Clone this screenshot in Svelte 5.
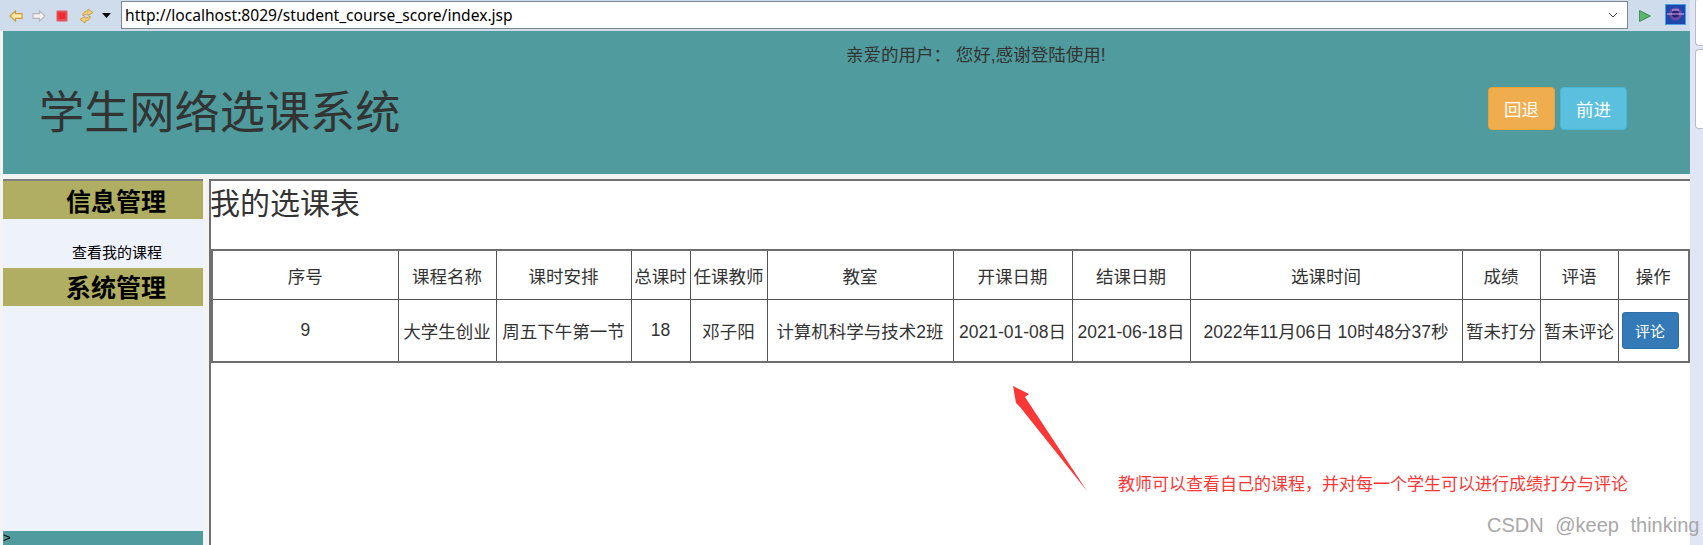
<script>
  const cols = [186, 98, 135, 59, 77, 186, 119, 118, 272, 78, 78, 71];
  const heads = ["序号", "课程名称", "课时安排", "总课时", "任课教师", "教室", "开课日期", "结课日期", "选课时间", "成绩", "评语", "操作"];
  const row = ["9", "大学生创业", "周五下午第一节", "18", "邓子阳", "计算机科学与技术2班", "2021-01-08日", "2021-06-18日", "2022年11月06日 10时48分37秒", "暂未打分", "暂未评论"];
</script>

<div class="page">
  <div class="main">
    <div class="toolbar">
      <div class="tools">
        <svg width="14" height="12" viewBox="0 0 15 13"><path d="M1 6.500 7 1v3h7v5H7v3z" fill="#fde9a8" stroke="#cf9a3a" stroke-width="1.300"/></svg>
        <svg width="14" height="12" viewBox="0 0 15 13"><path d="M14 6.500 8 1v3H1v5h7v3z" fill="#f2f2f2" stroke="#b4b8bc" stroke-width="1.300"/></svg>
        <svg class="stop" width="12" height="12" viewBox="0 0 12 12"><rect x="0.500" y="0.500" width="11" height="11" rx="1.500" fill="#e4505a" stroke="#dc98a2"/><rect x="2.500" y="2.500" width="7" height="6.500" fill="#ee2a30"/></svg>
        <svg class="sync" width="15" height="16" viewBox="0 0 15 16"><path d="M4 8C3 5 6 3 9 3V1l5 3.500-5 3V6C7 6 5 6.500 4 8zM11 8c1 3-2 5-5 5v2l-5-3.500 5-3V10c2 0 4-.5 5-2z" fill="#f5cf7c" stroke="#c6923a" stroke-width="0.800"/></svg>
        <svg class="drop" width="9" height="5" viewBox="0 0 9 5"><path d="M0 0h9L4.500 5z" fill="#000"/></svg>
      </div>
      <div class="url">
        <span>http://localhost:8029/student_course_score/index.jsp</span>
        <svg width="10" height="6" viewBox="0 0 10 6"><path d="M1 1l4 4 4-4" fill="none" stroke="#444" stroke-width="1"/></svg>
      </div>
      <svg class="go" width="12" height="12" viewBox="0 0 12 12"><path d="M0.500 0.500 11.500 6 0.500 11.500z" fill="#5cb56a" stroke="#3c8f63"/></svg>
      <svg class="ball" width="21" height="21" viewBox="0 0 21 21">
        <rect x="0.500" y="0.500" width="20" height="20" fill="#1f48ad" stroke="#48a0e8"/>
        <circle cx="10.500" cy="10" r="6.500" fill="#6a4aa8"/>
        <circle cx="10.500" cy="10" r="3.500" fill="#2a1f6a"/>
        <path d="M2 10h17" stroke="#d6b8ee" stroke-width="1"/>
        <path d="M7 6h7" stroke="#c4ace8" stroke-width="1"/>
      </svg>
    </div>

    <div class="body">
      <header class="banner">
        <p class="greet">亲爱的用户： 您好,感谢登陆使用!</p>
        <div class="banner-row">
          <h1>学生网络选课系统</h1>
          <div class="nav-btns">
            <button class="btn orange">回退</button>
            <button class="btn cyan">前进</button>
          </div>
        </div>
      </header>

      <div class="split">
        <aside class="side">
          <div class="side-head">信息管理</div>
          <div class="side-link">查看我的课程</div>
          <div class="side-head second">系统管理</div>
          <div class="side-fill"></div>
          <div class="side-foot">&gt;</div>
        </aside>

        <section class="content">
          <h2>我的选课表</h2>
          <table>
            <colgroup>
              {#each cols as w}
                <col style="width:{w}px" />
              {/each}
            </colgroup>
            <thead>
              <tr>
                {#each heads as h}
                  <th>{h}</th>
                {/each}
              </tr>
            </thead>
            <tbody>
              <tr>
                {#each row as c}
                  <td>{c}</td>
                {/each}
                <td><button class="comment">评论</button></td>
              </tr>
            </tbody>
          </table>
        </section>
      </div>
    </div>
  </div>

  <div class="rail">
    <div class="rail-box one"></div>
    <div class="rail-box two"></div>
  </div>

  <!-- annotation drawn on top of the screenshot -->
  <svg class="arrow" width="90" height="115" viewBox="0 0 90 115">
    <path d="M3 1 19 9 15 12 77 106 10 22 6 18z" fill="#fb3838"/>
  </svg>
  <div class="note">教师可以查看自己的课程，并对每一个学生可以进行成绩打分与评论</div>
  <div class="mark">CSDN @keep thinking</div>
</div>

<style>
  :global(body) {
    margin: 0;
    background: #fff;
  }
  .page {
    position: relative;
    display: flex;
    width: 1703px;
    height: 545px;
    overflow: hidden;
    font-family: "Liberation Sans", "Noto Sans CJK SC", sans-serif;
    color: #333;
  }
  .main {
    width: 1690px;
    display: flex;
    flex-direction: column;
  }
  .toolbar {
    height: 31px;
    background: #cfdcec;
    display: flex;
    align-items: center;
  }
  .tools {
    width: 121px;
    padding-left: 9px;
    box-sizing: border-box;
    display: flex;
    align-items: center;
    gap: 9px;
  }
  .stop {
    margin-left: 1px;
  }
  .sync {
    margin-left: 2px;
  }
  .drop {
    margin-left: -1px;
  }
  .url {
    width: 1507px;
    height: 28px;
    box-sizing: border-box;
    margin-bottom: 2px;
    border: 1px solid #7d8793;
    background: #fff;
    display: flex;
    align-items: center;
    justify-content: space-between;
    padding: 0 9px 0 3px;
    font: 15.600px "Noto Sans", sans-serif;
    color: #000;
  }
  .go {
    margin-left: 11px;
  }
  .ball {
    margin-left: 14px;
    margin-bottom: 2px;
  }
  .body {
    flex: 1;
    display: flex;
    flex-direction: column;
    padding-left: 3px;
    background: #f3f3f3;
    min-height: 0;
  }
  .banner {
    height: 143px;
    background: #4f9b9d;
    box-sizing: border-box;
    padding-top: 12px;
  }
  .greet {
    margin: 0 0 0 843px;
    font-size: 17.500px;
    line-height: 24px;
  }
  .banner-row {
    display: flex;
    justify-content: space-between;
    padding: 20px 63px 0 36px;
  }
  h1 {
    margin: 0;
    font-size: 45.200px;
    font-weight: 400;
    line-height: 54px;
  }
  .nav-btns {
    display: flex;
    gap: 5px;
  }
  .btn {
    width: 67px;
    height: 43px;
    border-radius: 4px;
    color: #fff;
    font: inherit;
    font-size: 17.500px;
    padding: 0;
  }
  .orange {
    background: #f0ad4e;
    border: 1px solid #eea236;
  }
  .cyan {
    background: #5bc0de;
    border: 1px solid #46b8da;
  }
  .split {
    flex: 1;
    display: flex;
    margin-top: 5px;
    min-height: 0;
  }
  .side {
    flex: none;
    width: 200px;
    display: flex;
    flex-direction: column;
    background: #eef2fb;
    border-top: 2px solid #808080;
  }
  .side-head {
    height: 38px;
    background: #afae62;
    color: #000;
    font-size: 25px;
    font-weight: 700;
    line-height: 42px;
    padding-left: 63px;
  }
  .side-link {
    height: 49px;
    box-sizing: border-box;
    padding: 23px 0 0 69px;
    color: #000;
    font-size: 15px;
    line-height: 22px;
  }
  .side-head.second {
    line-height: 40px;
  }
  .side-fill {
    flex: 1;
  }
  .side-foot {
    height: 14px;
    background: #4f9b9d;
    color: #000;
    font-size: 13px;
    line-height: 14px;
  }
  .content {
    flex: 1;
    min-width: 0;
    margin-left: 6px;
    background: #fff;
    border-top: 2px solid #707070;
    border-left: 2px solid #707070;
  }
  h2 {
    margin: 0 0 0 -1px;
    height: 68px;
    font-size: 30px;
    font-weight: 400;
    line-height: 46px;
  }
  table {
    border-collapse: collapse;
    table-layout: fixed;
    width: 1477px;
    margin-left: 0;
    font-size: 17.500px;
    border: 2px solid #6e6e6e;
  }
  th,
  td {
    border: 1px solid #555;
    text-align: center;
    padding: 0;
    font-weight: 400;
    white-space: nowrap;
  }
  tr:first-child th {
    height: 48px;
  }
  td {
    height: 61px;
  }
  .comment {
    width: 57px;
    height: 37px;
    background: #337ab7;
    border: 1px solid #2e6da4;
    border-radius: 3px;
    color: #fff;
    font: inherit;
    font-size: 15px;
    padding: 0;
    display: block;
    margin: 0 auto 0 3px;
  }
  .rail {
    flex: 1;
    background: #e0e6f5;
    padding-left: 5px;
    display: flex;
    flex-direction: column;
    gap: 3px;
  }
  .rail-box {
    border: 1px solid #b8bcc8;
    border-right: 0;
    border-radius: 4px 0 0 4px;
    background: #fff;
  }
  .rail-box.one {
    height: 46px;
    margin-top: -2px;
  }
  .rail-box.two {
    height: 78px;
  }
  .arrow {
    position: absolute;
    left: 1010px;
    top: 385px;
  }
  .note {
    position: absolute;
    left: 1118px;
    top: 473px;
    font-size: 17px;
    line-height: 24px;
    color: #fb3838;
    white-space: nowrap;
  }
  .mark {
    position: absolute;
    left: 1487px;
    top: 514px;
    font-size: 20px;
    word-spacing: 6px;
    line-height: 22px;
    color: #a8a8a8;
    white-space: nowrap;
  }
</style>
